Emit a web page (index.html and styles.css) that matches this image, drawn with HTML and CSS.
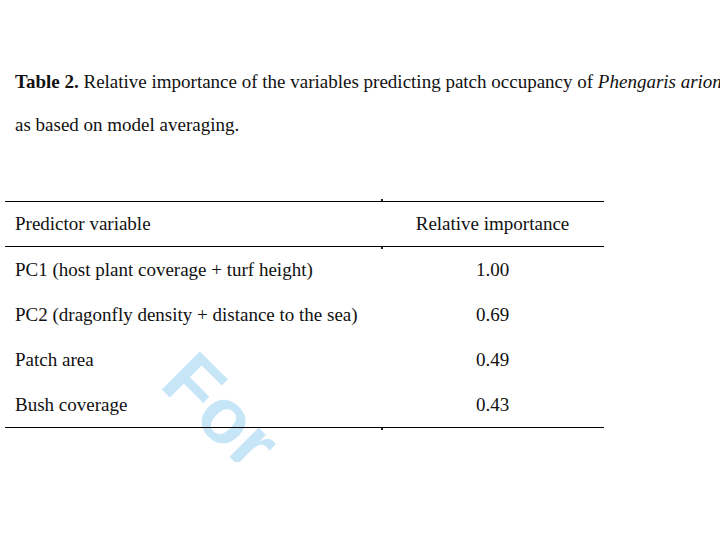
FILE: index.html
```html
<!DOCTYPE html>
<html>
<head>
<meta charset="utf-8">
<link rel="stylesheet" href="styles.css">
</head>
<body>
<div class="page">
  <div class="caption">
    <p class="line"><b>Table 2.</b> Relative importance of the variables predicting patch occupancy of <i>Phengaris arion.</i></p>
    <p class="line">as based on model averaging.</p>
  </div>
  <table class="data">
    <thead>
      <tr><th class="col-var">Predictor variable</th><th class="col-imp">Relative importance</th></tr>
    </thead>
    <tbody>
      <tr><td class="col-var">PC1 (host plant coverage + turf height)</td><td class="col-imp">1.00</td></tr>
      <tr><td class="col-var">PC2 (dragonfly density + distance to the sea)</td><td class="col-imp">0.69</td></tr>
      <tr><td class="col-var">Patch area</td><td class="col-imp">0.49</td></tr>
      <tr><td class="col-var">Bush coverage</td><td class="col-imp">0.43</td></tr>
    </tbody>
  </table>
  <div class="wm-clip"><div class="wm">For</div></div>
</div>
</body>
</html>
```
FILE: styles.css
```css
html, body {
  margin: 0;
  padding: 0;
  background: #fff;
}
.page {
  position: relative;
  z-index: 0;
  width: 720px;
  height: 540px;
  overflow: hidden;
  font-family: "Liberation Serif", "Times New Roman", serif;
  color: #111;
}
.caption {
  padding: 60px 0 0 15px;
}
.line {
  margin: 0;
  font-size: 19px;
  line-height: 43px;
  white-space: nowrap;
}
.data {
  margin: 55px 0 0 5px;
  width: 599px;
  border-collapse: collapse;
  font-size: 19px;
}
.data th, .data td {
  font-weight: normal;
  padding: 0;
}
.data th {
  height: 44px;
}
.data td {
  height: 45px;
}
.data thead tr {
  border-top: 1px solid #000;
  border-bottom: 1px solid #000;
}
.data tbody tr:last-child {
  border-bottom: 1px solid #000;
}
.col-var {
  width: 366px;
  text-align: left;
  padding-left: 10px !important;
}
.col-imp {
  position: relative;
  text-align: center;
}
.data thead .col-imp::before,
.data thead .col-imp::after,
.data tbody tr:last-child .col-imp::after {
  content: "";
  position: absolute;
  left: 0;
  width: 2px;
  height: 2px;
  background: #222;
}
.data thead .col-imp::before { top: -3px; }
.data thead .col-imp::after { bottom: -3px; }
.data tbody tr:last-child .col-imp::after { bottom: -3px; }
.wm-clip {
  position: absolute;
  left: 0;
  top: 0;
  width: 720px;
  height: 462px;
  overflow: hidden;
  z-index: -1;
}
.wm {
  position: absolute;
  left: 205px;
  top: 339px;
  font-family: "Liberation Sans", Arial, sans-serif;
  font-weight: bold;
  font-size: 78px;
  color: #c6e6f8;
  transform: rotate(45deg);
  transform-origin: left top;
  line-height: 1;
}
```
